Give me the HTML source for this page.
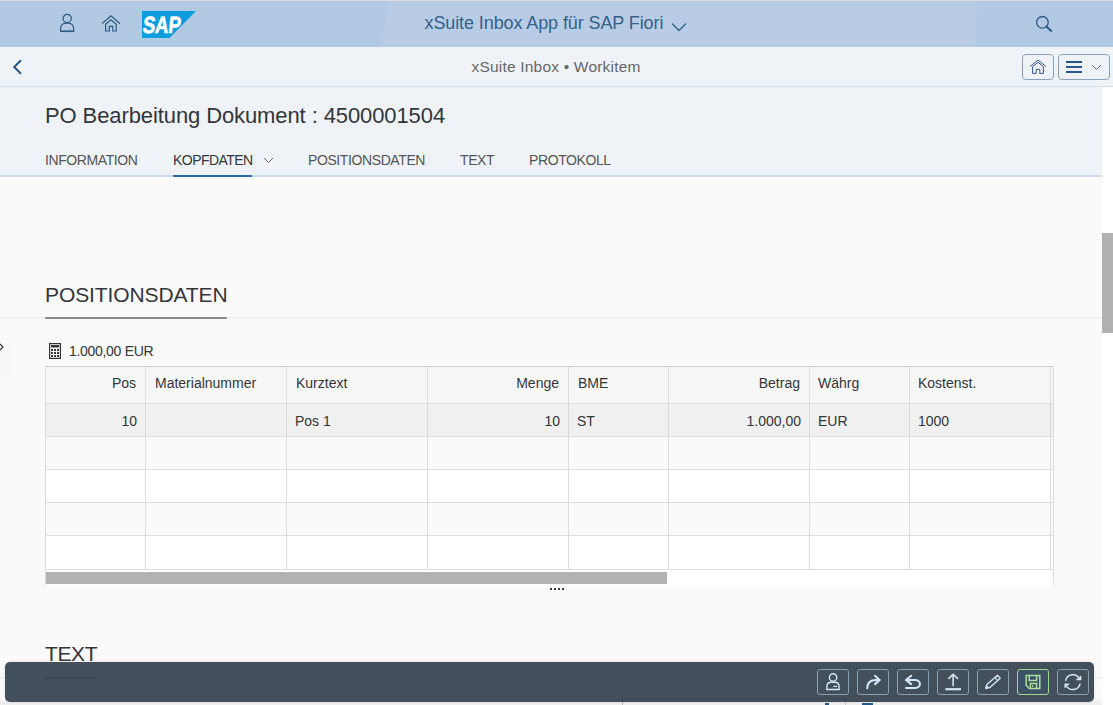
<!DOCTYPE html>
<html><head><meta charset="utf-8">
<style>
*{box-sizing:border-box;margin:0;padding:0}
html,body{width:1113px;height:705px;overflow:hidden;background:#fafafa;font-family:"Liberation Sans",sans-serif;color:#32363a}
.abs{position:absolute}
#shell{left:0;top:0;width:1113px;height:47px;background:#b1c9e2;border-top:1px solid #dddad8}
#subbar{left:0;top:47px;width:1113px;height:40px;background:#eff3f8;border-bottom:1px solid #d3e0ec}
#hdr{left:0;top:87px;width:1113px;height:90px;background:#eff3f8;border-bottom:2px solid #cddcec}
.t{position:absolute;white-space:nowrap;line-height:1}
#content{left:0;top:177px;width:1102px;height:528px;background:#fafafa}
#vscroll{left:1102px;top:87px;width:11px;height:618px;background:#fff}
#vthumb{left:1102px;top:233px;width:11px;height:100px;background:#b1b1b1}
table.g{position:absolute;left:45px;top:366px;border-collapse:collapse;table-layout:fixed}
.g td{border:1px solid #dcdcdc;font-size:14px;padding:0 9px;height:33px;white-space:nowrap;overflow:hidden}
#footer{left:5px;top:662px;width:1089px;height:39.5px;background:#434f5b;border-radius:5px;box-shadow:0 0 3px rgba(0,0,0,0.12)}
.fb{position:absolute;top:7px;width:32px;height:26px;border:1px solid #8b9eb0;border-radius:3px}
</style></head><body>
<div id="shell" class="abs">
  <svg class="abs" style="left:0;top:0" width="1113" height="46"><polygon points="388,0 977,0 975,46 381,46" fill="#b8cde5"/></svg>
  <!-- person icon -->
  <svg class="abs" style="left:58px;top:12px" width="18" height="22" viewBox="0 0 18 22" fill="none" stroke="#2d5a85" stroke-width="1.2">
    <circle cx="9.2" cy="5.4" r="4.1"/>
    <path d="M2.6 18.3 V15.2 C2.6 11.7 5.5 10.2 9.1 10.2 C12.7 10.2 15.6 11.7 15.6 15.2 V18.3 Z"/>
    <path d="M2.6 18.3 H15.6" stroke-width="1.5"/>
  </svg>
  <!-- home icon -->
  <svg class="abs" style="left:101px;top:13.6px" width="20" height="20" viewBox="0 0 20 20" fill="none" stroke="#2d5a85" stroke-width="1.2" stroke-linejoin="miter">
    <path d="M1.2 8.5 L9.9 0.9 L18.8 8.5"/>
    <path d="M4.6 16 V9.3 L9.9 4.9 L15.2 9.3 V16 H11.7 V11.4 H8.3 V16 Z"/>
  </svg>
  <!-- SAP logo -->
  <svg class="abs" style="left:142px;top:10px" width="54" height="27" viewBox="0 0 54 27">
    <path d="M0 0 H54 L27.5 27 H0 Z" fill="#0a9de0"/>
    <text x="1.5" y="22.3" font-family="Liberation Sans" font-weight="bold" font-size="23.5" fill="#fff" textLength="38" lengthAdjust="spacingAndGlyphs" stroke="#fff" stroke-width="0.7" transform="skewX(-6) translate(1 0)">SAP</text>
  </svg>
  <div class="t" style="left:424.5px;top:12.5px;font-size:18px;color:#34618a;letter-spacing:-0.1px">xSuite Inbox App für SAP Fiori</div>
  <svg class="abs" style="left:671px;top:21px" width="16" height="10" viewBox="0 0 16 10" fill="none" stroke="#34618a" stroke-width="1.3"><path d="M1 1.5 L8 8.5 L15 1.5"/></svg>
  <!-- search -->
  <svg class="abs" style="left:1034px;top:14px" width="20" height="20" viewBox="0 0 20 20" fill="none" stroke="#2f5a86" stroke-width="1.3">
    <circle cx="8.4" cy="7.3" r="5.8"/><path d="M12.4 11.4 L17.2 15.9" stroke-width="2.1" stroke-linecap="round"/>
  </svg>
</div>

<div id="subbar" class="abs">
  <svg class="abs" style="left:11px;top:12px" width="12" height="16" viewBox="0 0 12 16" fill="none" stroke="#22538a" stroke-width="1.9" stroke-linecap="round"><path d="M9.5 1.8 L3.2 8 L9.5 14.2"/></svg>
  <div class="t" style="left:471.5px;top:11.5px;font-size:15.5px;color:#666;letter-spacing:0.2px">xSuite Inbox • Workitem</div>
  <div class="abs" style="left:1022px;top:7px;width:32px;height:26px;border:1px solid #8aa3bb;border-radius:4px"></div>
  <svg class="abs" style="left:1029px;top:12px" width="18" height="16" viewBox="0 0 18 16" fill="none" stroke="#2f5a86" stroke-width="1">
    <path d="M1 7.6 L9 1 L17 7.6"/><path d="M3.6 14.4 V7.6 L9 3.3 L14.4 7.6 V14.4 H10.8 V10.4 H7.2 V14.4 Z"/>
  </svg>
  <div class="abs" style="left:1058px;top:7px;width:52px;height:26px;border:1px solid #8aa3bb;border-radius:4px"></div>
  <div class="abs" style="left:1066px;top:14px;width:16px;height:2px;background:#2a578a"></div>
  <div class="abs" style="left:1066px;top:19px;width:16px;height:2px;background:#2a578a"></div>
  <div class="abs" style="left:1066px;top:24px;width:16px;height:2px;background:#2a578a"></div>
  <svg class="abs" style="left:1091px;top:17px" width="11" height="7" viewBox="0 0 11 7" fill="none" stroke="#5a6a8a" stroke-width="1"><path d="M1 1 L5.5 5.5 L10 1"/></svg>
</div>

<div id="hdr" class="abs">
  <div class="t" style="left:45px;top:18px;font-size:22px;color:#32363a;letter-spacing:-0.1px">PO Bearbeitung Dokument : 4500001504</div>
  <div class="t" style="left:45px;top:66px;font-size:14px;color:#555;letter-spacing:-0.4px">INFORMATION</div>
  <div class="t" style="left:173px;top:66px;font-size:14px;color:#32363a;letter-spacing:-0.55px">KOPFDATEN</div>
  <svg class="abs" style="left:263px;top:70px" width="11" height="7" viewBox="0 0 11 7" fill="none" stroke="#666" stroke-width="1"><path d="M1 1 L5.5 5.5 L10 1"/></svg>
  <div class="abs" style="left:173px;top:88px;width:79px;height:2px;background:#2d6ba2"></div>
  <div class="t" style="left:308px;top:66px;font-size:14px;color:#555;letter-spacing:-0.4px">POSITIONSDATEN</div>
  <div class="t" style="left:460px;top:66px;font-size:14px;color:#555;letter-spacing:-0.4px">TEXT</div>
  <div class="t" style="left:529px;top:66px;font-size:14px;color:#555;letter-spacing:-0.4px">PROTOKOLL</div>
</div>

<div id="content" class="abs"></div>
<div id="vscroll" class="abs"></div>
<div id="vthumb" class="abs"></div>

<!-- section POSITIONSDATEN -->
<div class="abs" style="left:0;top:317px;width:1102px;height:1px;background:#e8e8e8"></div>
<div class="t" style="left:45px;top:283.5px;font-size:21px;color:#32363a;letter-spacing:-0.1px">POSITIONSDATEN</div>
<div class="abs" style="left:45px;top:317px;width:182px;height:2px;background:#8c8c8c"></div>

<!-- left arrow hint -->
<div class="abs" style="left:0;top:343px;width:12px;height:32px;background:#f7f7f7"></div>
<svg class="abs" style="left:0;top:343px" width="5" height="8" viewBox="0 0 5 8" fill="none" stroke="#333" stroke-width="1.2"><path d="M0 1 L3 4 L0 7"/></svg>

<!-- calculator -->
<svg class="abs" style="left:49px;top:343px" width="12" height="16" viewBox="0 0 12 16">
  <rect x="0.6" y="0.6" width="10.8" height="14.8" fill="none" stroke="#333" stroke-width="1.2"/>
  <rect x="2" y="2" width="8" height="2.5" fill="#333"/>
  <g fill="#3a3a3a"><rect x="2" y="6" width="2" height="2"/><rect x="5" y="6" width="2" height="2"/><rect x="8" y="6" width="2" height="2"/>
  <rect x="2" y="9" width="2" height="2"/><rect x="5" y="9" width="2" height="2"/><rect x="8" y="9" width="2" height="2"/>
  <rect x="2" y="12" width="2" height="2"/><rect x="5" y="12" width="2" height="2"/><rect x="8" y="12" width="2" height="2"/></g>
</svg>
<div class="t" style="left:69px;top:344px;font-size:14px;color:#32363a;letter-spacing:-0.3px">1.000,00 EUR</div>

<!-- TABLE -->
<div class="abs" style="left:45px;top:366px;width:1008px;height:37px;background:#f7f7f7"></div>
<div class="abs" style="left:45px;top:403px;width:1008px;height:33px;background:#f0f0f0"></div>
<div class="abs" style="left:45px;top:436px;width:1008px;height:33px;background:#fafafa"></div>
<div class="abs" style="left:45px;top:469px;width:1008px;height:33px;background:#ffffff"></div>
<div class="abs" style="left:45px;top:502px;width:1008px;height:33px;background:#fafafa"></div>
<div class="abs" style="left:45px;top:535px;width:1008px;height:34px;background:#ffffff"></div>
<div class="abs" style="left:45px;top:569px;width:1008px;height:17px;background:#fff"></div>
<div class="abs" style="left:46px;top:572px;width:621px;height:12px;background:#b3b3b3"></div>
<div class="abs" style="left:45px;top:365px;width:1009px;height:1px;background:#ffffff"></div>
<div class="abs" style="left:45px;top:366px;width:1009px;height:1px;background:#cacaca"></div>
<div class="abs" style="left:45px;top:403px;width:1008px;height:1px;background:#dedede"></div>
<div class="abs" style="left:45px;top:436px;width:1008px;height:1px;background:#dedede"></div>
<div class="abs" style="left:45px;top:469px;width:1008px;height:1px;background:#dedede"></div>
<div class="abs" style="left:45px;top:502px;width:1008px;height:1px;background:#dedede"></div>
<div class="abs" style="left:45px;top:535px;width:1008px;height:1px;background:#dedede"></div>
<div class="abs" style="left:45px;top:569px;width:1008px;height:1px;background:#dedede"></div>
<div class="abs" style="left:45px;top:366px;width:1px;height:220px;background:#dcdcdc"></div>
<div class="abs" style="left:145px;top:367px;width:1px;height:202px;background:#dcdcdc"></div>
<div class="abs" style="left:286px;top:367px;width:1px;height:202px;background:#dcdcdc"></div>
<div class="abs" style="left:427px;top:367px;width:1px;height:202px;background:#dcdcdc"></div>
<div class="abs" style="left:568px;top:367px;width:1px;height:202px;background:#dcdcdc"></div>
<div class="abs" style="left:668px;top:367px;width:1px;height:202px;background:#dcdcdc"></div>
<div class="abs" style="left:809px;top:367px;width:1px;height:202px;background:#dcdcdc"></div>
<div class="abs" style="left:909px;top:367px;width:1px;height:202px;background:#dcdcdc"></div>
<div class="abs" style="left:1050px;top:367px;width:1px;height:202px;background:#dcdcdc"></div>
<div class="abs" style="left:1053px;top:366px;width:1px;height:220px;background:#dcdcdc"></div>
<div class="abs" style="left:550px;top:588px;width:2px;height:2px;background:#3a3a3a"></div>
<div class="abs" style="left:554px;top:588px;width:2px;height:2px;background:#3a3a3a"></div>
<div class="abs" style="left:558px;top:588px;width:2px;height:2px;background:#3a3a3a"></div>
<div class="abs" style="left:562px;top:588px;width:2px;height:2px;background:#3a3a3a"></div>
<div class="t" style="right:977px;top:376px;font-size:14px;color:#32363a">Pos</div>
<div class="t" style="left:155px;top:376px;font-size:14px;color:#32363a">Materialnummer</div>
<div class="t" style="left:296px;top:376px;font-size:14px;color:#32363a">Kurztext</div>
<div class="t" style="right:554px;top:376px;font-size:14px;color:#32363a">Menge</div>
<div class="t" style="left:578px;top:376px;font-size:14px;color:#32363a">BME</div>
<div class="t" style="right:313px;top:376px;font-size:14px;color:#32363a">Betrag</div>
<div class="t" style="left:818px;top:376px;font-size:14px;color:#32363a">Währg</div>
<div class="t" style="left:918px;top:376px;font-size:14px;color:#32363a">Kostenst.</div>
<div class="t" style="right:976px;top:414px;font-size:14px;color:#32363a">10</div>
<div class="t" style="left:295px;top:414px;font-size:14px;color:#32363a">Pos 1</div>
<div class="t" style="right:553px;top:414px;font-size:14px;color:#32363a">10</div>
<div class="t" style="left:577px;top:414px;font-size:14px;color:#32363a">ST</div>
<div class="t" style="right:312px;top:414px;font-size:14px;color:#32363a">1.000,00</div>
<div class="t" style="left:818px;top:414px;font-size:14px;color:#32363a">EUR</div>
<div class="t" style="left:918px;top:414px;font-size:14px;color:#32363a">1000</div>

<!-- TEXT section -->
<div class="t" style="left:45px;top:643px;font-size:21px;color:#32363a;letter-spacing:-0.4px">TEXT</div>

<!-- bottom strip below footer -->
<div class="abs" style="left:0;top:677px;width:1102px;height:1px;background:#e8e8e8"></div>
<div class="abs" style="left:0;top:701px;width:1102px;height:4px;background:#efefef"></div>
<div class="abs" style="left:622px;top:690px;width:1px;height:15px;background:#bbb"></div>
<div class="abs" style="left:845px;top:690px;width:1px;height:15px;background:#ccc"></div>
<div class="abs" style="left:825px;top:703px;width:4px;height:2px;background:#2a5a8a"></div>
<div class="abs" style="left:862px;top:703px;width:11px;height:2px;background:#2a5a8a"></div>

<div id="footer" class="abs">
  <div class="abs" style="left:40px;top:15px;width:52px;height:2px;background:#3a4550"></div>
  <div class="abs" style="left:617px;top:36px;width:224px;height:1px;background:#3c4651"></div>
  <div class="abs" style="left:617px;top:36px;width:1px;height:4px;background:#3c4651"></div>
  <div class="abs" style="left:840px;top:36px;width:1px;height:4px;background:#3c4651"></div>
  <!-- 1 person -->
  <div class="fb" style="left:812px"></div>
  <svg class="abs" style="left:812px;top:7px" width="32" height="26" viewBox="0 0 32 26" fill="none" stroke="#d3e8fa" stroke-width="1.4">
    <circle cx="16.1" cy="8.4" r="3.7"/>
    <path d="M9.9 20.5 V17.6 Q9.9 13.3 14.2 13.3 H18 Q22.1 13.3 22.1 17.6 V20.5 Z"/>
    <path d="M16.3 17.4 H20.1" stroke-width="1.2"/>
  </svg>
  <!-- 2 redo/forward -->
  <div class="fb" style="left:852px"></div>
  <svg class="abs" style="left:852px;top:7px" width="32" height="26" viewBox="0 0 32 26" fill="none" stroke="#d3e8fa" stroke-width="2.1" stroke-linecap="round" stroke-linejoin="round">
    <path d="M10.2 19.2 Q10.4 11 19 11 H22.5"/>
    <path d="M18 6.8 L22.6 11 L18 15.1"/>
  </svg>
  <!-- 3 undo -->
  <div class="fb" style="left:892px"></div>
  <svg class="abs" style="left:892px;top:7px" width="32" height="26" viewBox="0 0 32 26" fill="none" stroke="#d3e8fa" stroke-width="2.1" stroke-linecap="round" stroke-linejoin="round">
    <path d="M14.2 6.8 L9 11 L14.2 15.1"/>
    <path d="M9.3 11 H18.3 A4.6 4 0 0 1 18.3 19 H9"/>
  </svg>
  <!-- 4 upload -->
  <div class="fb" style="left:932px"></div>
  <svg class="abs" style="left:932px;top:7px" width="32" height="26" viewBox="0 0 32 26" fill="none" stroke="#cfe3f5" stroke-width="1.6" stroke-linecap="round" stroke-linejoin="round">
    <path d="M16.1 16.6 V5.6"/>
    <path d="M11.8 9.4 L16.1 5.3 L20.5 9.4"/>
    <path d="M8.4 20.2 H24" stroke-width="2.2" stroke-linecap="butt"/>
  </svg>
  <!-- 5 edit -->
  <div class="fb" style="left:972px"></div>
  <svg class="abs" style="left:972px;top:7px" width="32" height="26" viewBox="0 0 32 26" fill="none" stroke="#d3e8fa" stroke-width="1.3" stroke-linejoin="round">
    <g transform="translate(8.7 19.4) rotate(-41.5)">
      <path d="M0 0 L3.4 -2.1 H17.6 V2.1 H3.4 Z"/>
      <path d="M14.2 -2.1 V2.1"/>
      <path d="M0.3 0 L2.4 -1 V1 Z" fill="#d3e8fa"/>
    </g>
  </svg>
  <!-- 6 save -->
  <div class="fb" style="left:1012px;background:#3f5164;border-color:#9cdb90"></div>
  <svg class="abs" style="left:1012px;top:7px" width="32" height="26" viewBox="0 0 32 26" fill="none" stroke="#a8df9e" stroke-width="1.5">
    <path d="M9.2 6.4 H22.8 V19.4 H12.2 L9.2 16.2 Z"/>
    <path d="M12.2 6.4 V11.4 H19.6 V6.4"/>
    <path d="M13.4 19.4 V14.4 H19.6 V19.4"/>
    <path d="M15.6 16.2 V18" stroke-width="1.1"/>
  </svg>
  <!-- 7 refresh -->
  <div class="fb" style="left:1052px"></div>
  <svg class="abs" style="left:1052px;top:7px" width="32" height="26" viewBox="0 0 32 26" fill="none" stroke="#d3e8fa" stroke-width="1.4">
    <path d="M8.6 11.8 A7.4 7.4 0 0 1 22.6 10"/>
    <path d="M23.2 14.4 A7.4 7.4 0 0 1 9.2 16.2"/>
    <path d="M19.4 10.4 H23.5 V7" stroke-width="1.7"/>
    <path d="M12.1 15.3 H8.3 V18.8" stroke-width="1.7"/>
  </svg>
</div>
</body></html>
